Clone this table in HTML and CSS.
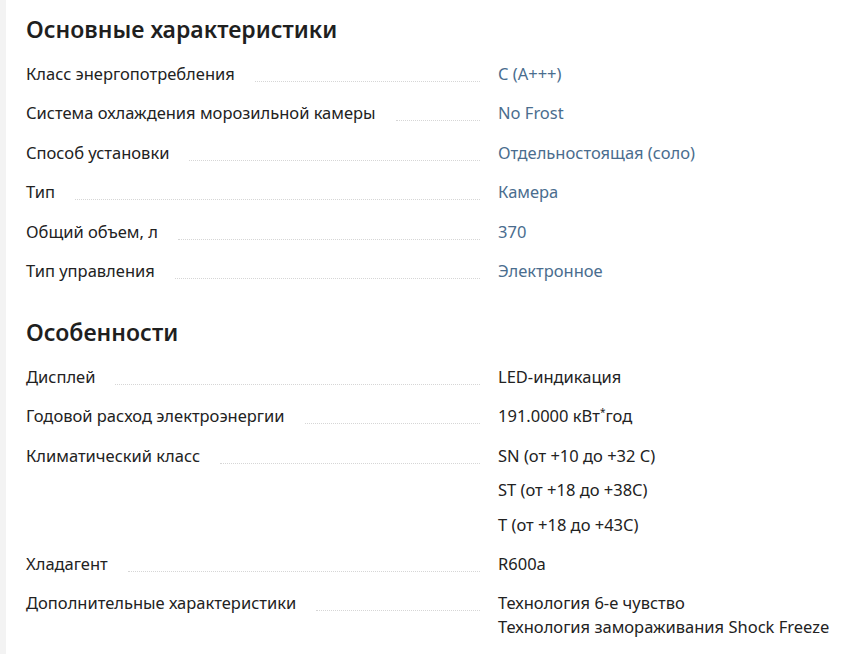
FILE: index.html
```html
<!DOCTYPE html>
<html lang="ru">
<head>
<meta charset="utf-8">
<link rel="stylesheet" href="styles.css">
</head>
<body>
<div class="page">
  <div class="strip"></div>
  <div class="content">
    <section class="section">
      <h2 class="title">Основные характеристики</h2>
      <div class="rows">
        <div class="row"><div class="label"><span class="name">Класс энергопотребления</span><span class="fill"></span></div><div class="values link"><span>C (A+++)</span></div></div>
        <div class="row"><div class="label"><span class="name">Система охлаждения морозильной камеры</span><span class="fill"></span></div><div class="values link"><span>No Frost</span></div></div>
        <div class="row"><div class="label"><span class="name">Способ установки</span><span class="fill"></span></div><div class="values link"><span>Отдельностоящая (соло)</span></div></div>
        <div class="row"><div class="label"><span class="name">Тип</span><span class="fill"></span></div><div class="values link"><span>Камера</span></div></div>
        <div class="row"><div class="label"><span class="name">Общий объем, л</span><span class="fill"></span></div><div class="values link"><span>370</span></div></div>
        <div class="row"><div class="label"><span class="name">Тип управления</span><span class="fill"></span></div><div class="values link"><span>Электронное</span></div></div>
      </div>
    </section>
    <section class="section">
      <h2 class="title">Особенности</h2>
      <div class="rows">
        <div class="row"><div class="label"><span class="name">Дисплей</span><span class="fill"></span></div><div class="values"><span>LED-индикация</span></div></div>
        <div class="row"><div class="label"><span class="name">Годовой расход электроэнергии</span><span class="fill"></span></div><div class="values"><span>191.0000 кВт<sup class="star">*</sup>год</span></div></div>
        <div class="row"><div class="label"><span class="name">Климатический класс</span><span class="fill"></span></div><div class="values"><span>SN (от +10 до +32 C)</span><span>ST (от +18 до +38C)</span><span>T (от +18 до +43C)</span></div></div>
        <div class="row"><div class="label"><span class="name">Хладагент</span><span class="fill"></span></div><div class="values"><span>R600a</span></div></div>
        <div class="row"><div class="label"><span class="name">Дополнительные характеристики</span><span class="fill"></span></div><div class="values"><span>Технология 6-е чувство<br>Технология замораживания Shock Freeze</span></div></div>
      </div>
    </section>
  </div>
</div>
</body>
</html>
```

FILE: styles.css
```css
* { box-sizing: border-box; }
html, body { margin: 0; padding: 0; background: #fff; }
body {
  font-family: "Noto Sans", "Liberation Sans", sans-serif;
  color: #222;
  width: 859px;
  height: 654px;
  overflow: hidden;
}
.page { display: flex; min-height: 654px; }
.strip { width: 6px; background: #f3f3f3; flex: none; }
.content { padding: 13px 0 0 20px; flex: 1; display: flex; flex-direction: column; gap: 32.5px; }
.title {
  margin: 0 0 17px 0;
  font-size: 23px;
  line-height: 32px;
  font-weight: 600;
  color: #1f1f1f;
}
.rows { display: flex; flex-direction: column; gap: 15.45px; }
.row { display: grid; grid-template-columns: 454px 1fr; gap: 18px; font-size: 16.5px; line-height: 24px; align-items: start; }
.label { display: flex; align-items: flex-start; }
.name { flex: none; }
.fill { flex: 1; margin-left: 20px; border-bottom: 1px dotted #d6d6d6; height: 20px; }
.values { display: flex; flex-direction: column; gap: 10.5px; }
.link { color: #4a6d8e; }
.star { font-size: 10px; line-height: 0; vertical-align: 6px; }
```
